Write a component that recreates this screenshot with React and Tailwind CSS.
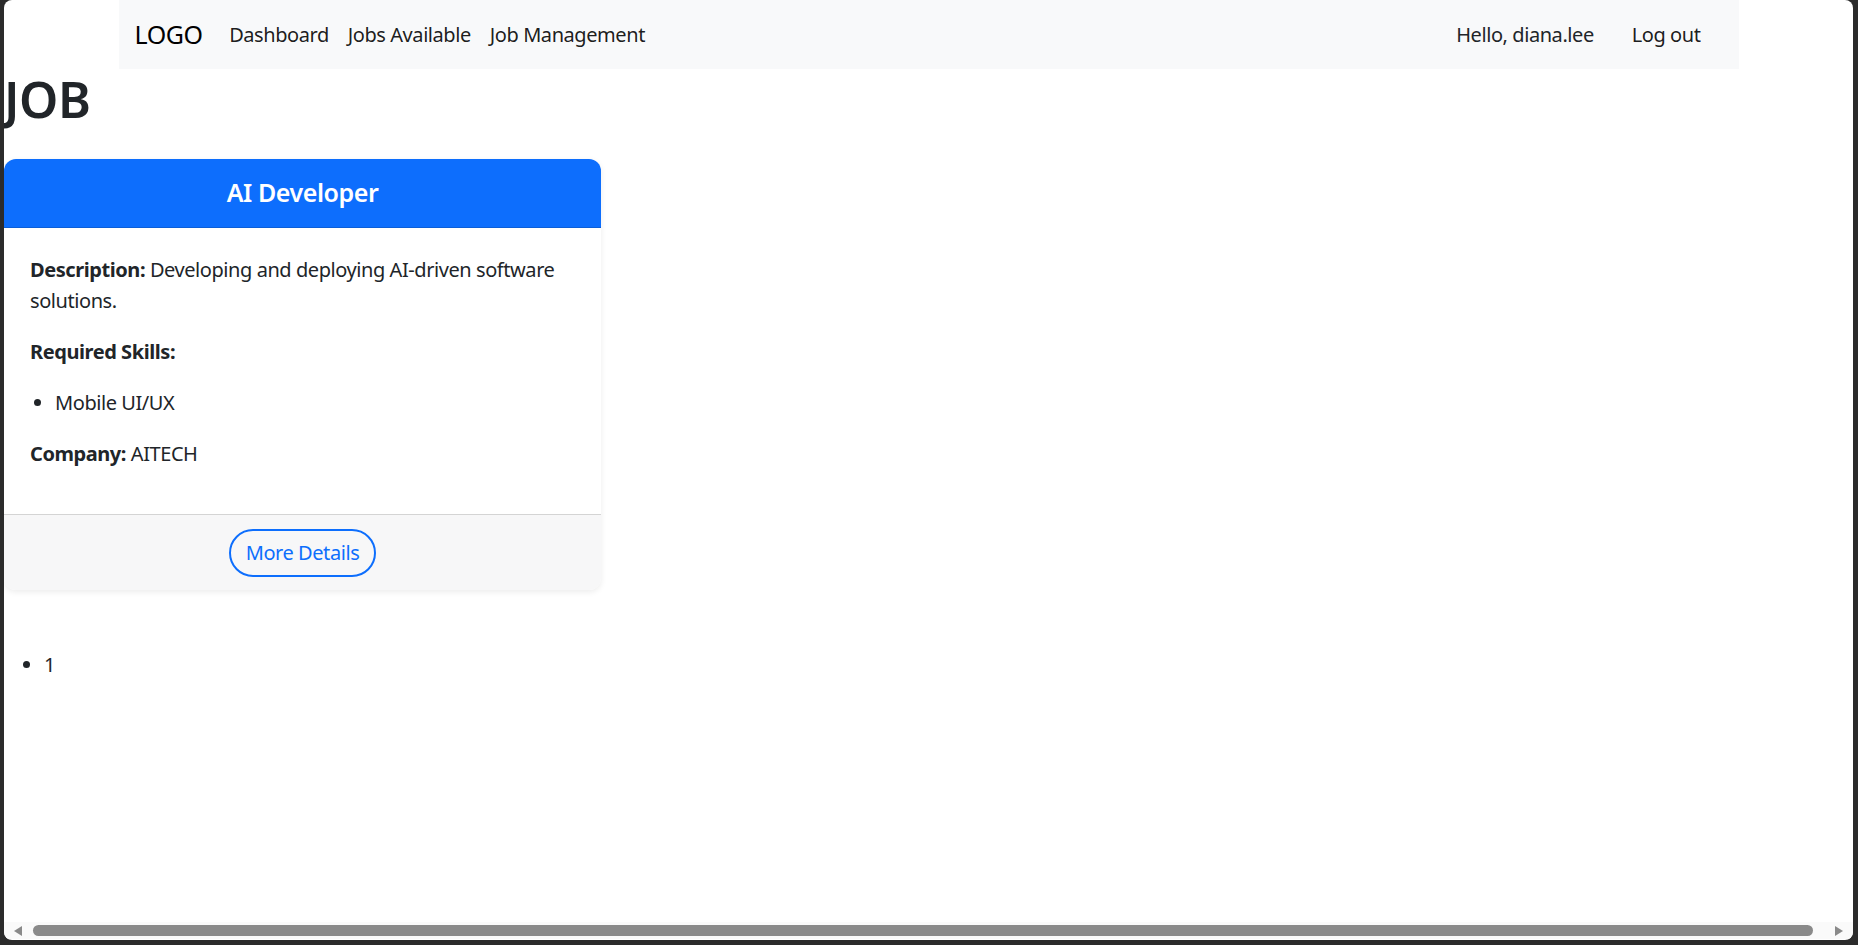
export default function App() {
  return (
    <div className="w-[1858px] h-[945px] bg-[#2b2b2b] overflow-hidden tracking-[-0.027em]" style={{ fontFamily: '"Noto Sans", "Open Sans", sans-serif' }}>
      <div className="ml-[4px] w-[1849px] h-[940px] bg-white rounded-[8px] flex flex-col overflow-hidden text-[#212529]">
        <div className="flex-1 overflow-hidden">
          <nav className="mx-auto w-[1620px] h-[69px] bg-[#f8f9fa] flex items-center pl-[16px] pr-[38px]">
            <span className="text-[25px] text-black mr-[17px] leading-none">LOGO</span>
            <a className="px-[9.5px] text-[20px] text-black/90">Dashboard</a>
            <a className="px-[9.5px] text-[20px] text-black/90">Jobs Available</a>
            <a className="px-[9.5px] text-[20px] text-black/90">Job Management</a>
            <span className="ml-auto text-[20px] text-[#212529] mr-[38px]">Hello, diana.lee</span>
            <a className="text-[20px] text-black/90">Log out</a>
          </nav>
          <h1 className="text-[50px] font-semibold leading-[1.2] mt-0 mb-[30px]">JOB</h1>
          <div className="w-[597px] rounded-[12px] shadow-[0_2px_6px_rgba(0,0,0,0.08)] overflow-hidden">
            <div className="h-[69px] bg-[#0d6efd] border-b border-[#0b5ed7] flex items-center justify-center">
              <h5 className="text-[25px] font-semibold text-white">AI Developer</h5>
            </div>
            <div className="pl-[26px] pr-[20px] pt-[26px] pb-[25px] text-[20px] leading-[31px]">
              <p className="mb-[20px]"><strong className="font-bold">Description:</strong> Developing and deploying AI-driven software solutions.</p>
              <p className="mb-[20px]"><strong className="font-bold">Required Skills:</strong></p>
              <ul className="list-disc pl-[25px] mb-[20px]">
                <li>Mobile UI/UX</li>
              </ul>
              <p className="mb-[20px]"><strong className="font-bold">Company:</strong> AITECH</p>
            </div>
            <div className="border-t border-[#d4d4d4] bg-[#f7f7f8] h-[76px] flex items-center justify-center">
              <button className="h-[48px] px-[15px] rounded-full border-2 border-[#0d6efd] text-[#0d6efd] text-[20px]">More Details</button>
            </div>
          </div>
          <ul className="list-disc pl-[40px] mt-[60px] text-[20px] leading-[30px]">
            <li>1</li>
          </ul>
        </div>
        <div className="h-[17px] mb-[1px] bg-[#fafafa] flex items-center px-[9px]">
          <svg width="10" height="12" viewBox="0 0 10 12"><path d="M9 1 L1 6 L9 11 Z" fill="#8a8a8a" /></svg>
          <div className="ml-[10px] w-[1780px] h-[11px] rounded-full bg-[#8a8a8a]" />
          <div className="flex-1" />
          <svg width="10" height="12" viewBox="0 0 10 12"><path d="M1 1 L9 6 L1 11 Z" fill="#8a8a8a" /></svg>
        </div>
      </div>
    </div>
  );
}
